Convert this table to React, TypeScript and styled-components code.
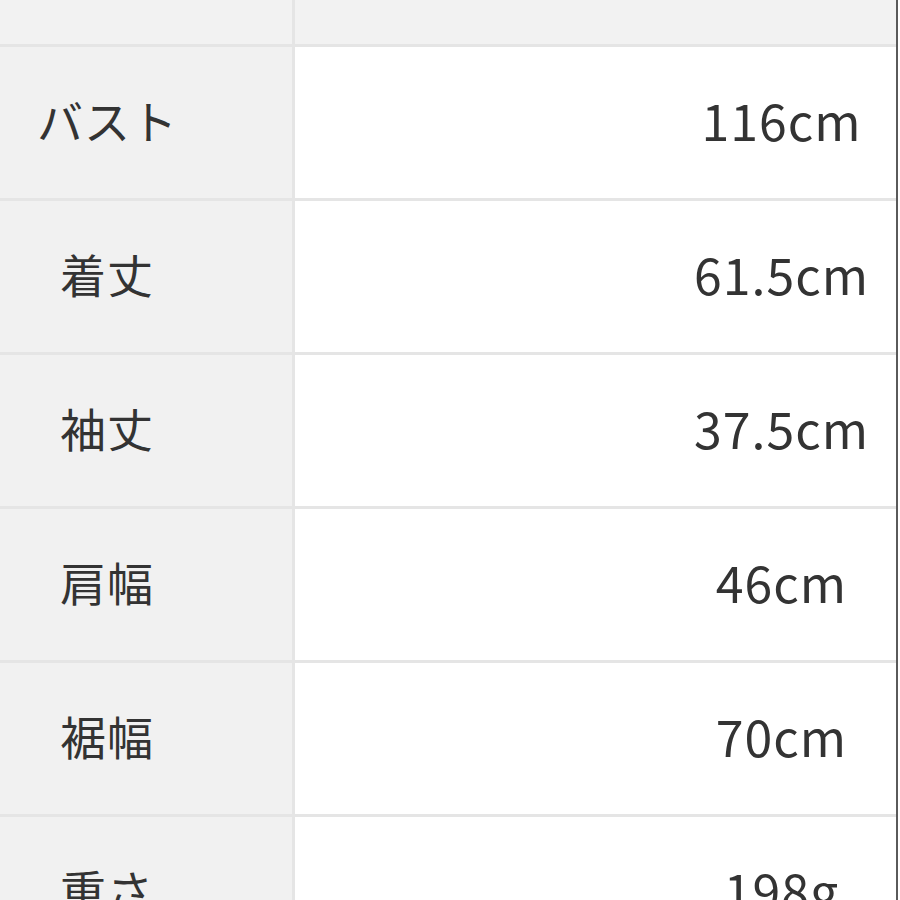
import React from "react";
import styled, { createGlobalStyle } from "styled-components";

const Global = createGlobalStyle`
  html, body {
    margin: 0;
    padding: 0;
    background: #ffffff;
  }
  body {
    font-family: "Noto Sans CJK JP", "Noto Sans", sans-serif;
    color: #333333;
  }
`;

const Page = styled.div`
  width: 900px;
  height: 900px;
  overflow: hidden;
  background: #ffffff;
`;

const Table = styled.div`
  width: 898px;
  display: grid;
  grid-template-columns: 292px 1fr;
  column-gap: 3px;
  row-gap: 3px;
  background: #e5e5e5;
  border-right: 2px solid #5a5a5a;
  box-sizing: border-box;
`;

const Head = styled.div`
  height: 44px;
  background: #f2f2f2;
`;

const Label = styled.div<{ $indent: number }>`
  height: 151px;
  box-sizing: border-box;
  background: #f1f1f1;
  display: flex;
  align-items: center;
  padding-left: ${(p) => p.$indent}px;
  padding-bottom: 8px;
  font-size: 46px;
  letter-spacing: 1px;
  color: #333333;
`;

const Value = styled.div`
  height: 151px;
  box-sizing: border-box;
  background: #ffffff;
  display: flex;
  align-items: center;
  justify-content: center;
  padding-left: 372px;
  padding-bottom: 8px;
  font-size: 50px;
  letter-spacing: 1px;
  color: #333333;
`;

const rows = [
  { label: "バスト", value: "116cm", indent: 37 },
  { label: "着丈", value: "61.5cm", indent: 60 },
  { label: "袖丈", value: "37.5cm", indent: 60 },
  { label: "肩幅", value: "46cm", indent: 60 },
  { label: "裾幅", value: "70cm", indent: 60 },
  { label: "重さ", value: "198g", indent: 60 },
];

const App = () => {
  return (
    <Page>
      <Global />
      <Table>
        <Head />
        <Head />
        {rows.map((r) => (
          <React.Fragment key={r.label}>
            <Label $indent={r.indent}>{r.label}</Label>
            <Value>{r.value}</Value>
          </React.Fragment>
        ))}
      </Table>
    </Page>
  );
};

export default App;
